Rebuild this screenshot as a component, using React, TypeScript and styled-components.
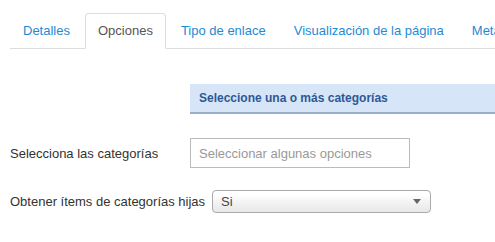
import React from "react";
import styled, { createGlobalStyle } from "styled-components";

const Global = createGlobalStyle`
  html, body { margin: 0; padding: 0; background: #fff; }
  body { font-family: "Liberation Sans", Arial, sans-serif; font-size: 13px; color: #333; overflow: hidden; }
`;

const Page = styled.div`
  width: 495px;
  height: 242px;
  overflow: hidden;
  padding: 13px 0 0 10px;
  box-sizing: border-box;
`;

const TabList = styled.ul`
  list-style: none;
  margin: 0;
  padding: 0;
  display: flex;
  white-space: nowrap;
  border-bottom: 1px solid #ddd;
  width: 600px;
`;

const Tab = styled.li<{ $active?: boolean }>`
  margin: 0 2px -1px 0;
  padding: 8px 12px;
  line-height: 18px;
  font-size: 13px;
  border: 1px solid ${(p) => (p.$active ? "#ddd" : "transparent")};
  border-bottom-color: ${(p) => (p.$active ? "#fff" : "transparent")};
  border-radius: 4px 4px 0 0;
  background: ${(p) => (p.$active ? "#fff" : "transparent")};
  color: ${(p) => (p.$active ? "#555" : "#1d8ad6")};
  cursor: pointer;
`;

const Content = styled.div`
  padding-top: 35px;
`;

const SectionHeader = styled.div`
  margin-left: 180px;
  height: 28px;
  background: #d6e6f8;
  border-bottom: 2px solid #98aecd;
  display: flex;
  align-items: center;
  padding-left: 9px;
  margin-right: -10px;
  font-weight: bold;
  font-size: 12px;
  color: #2f5893;
`;

const Row = styled.div<{ $top: number }>`
  display: flex;
  align-items: center;
  margin-top: ${(p) => p.$top}px;
`;

const Label = styled.label`
  flex-shrink: 0;
  min-width: 180px;
  padding-right: 7px;
  box-sizing: border-box;
  font-size: 13px;
  color: #333;
  white-space: nowrap;
`;

const TextInput = styled.input`
  width: 220px;
  height: 30px;
  box-sizing: border-box;
  border: 1px solid #bbb;
  padding: 0 8px;
  font-family: "Liberation Sans", Arial, sans-serif;
  font-size: 13px;
  color: #444;
  outline: none;
  &::placeholder { color: #999; }
`;

const Select = styled.div`
  width: 219px;
  height: 23px;
  box-sizing: border-box;
  border: 1px solid #aaa;
  border-radius: 4px;
  background: linear-gradient(#ffffff 20%, #f4f4f4 50%, #e8e8e8 100%);
  display: flex;
  align-items: center;
  justify-content: space-between;
  padding: 0 9px 0 8px;
  font-size: 13px;
  color: #444;
`;

const Arrow = styled.span`
  width: 0;
  height: 0;
  border-left: 4px solid transparent;
  border-right: 4px solid transparent;
  border-top: 5px solid #666;
`;

export default function App() {
  const tabs = ["Detalles", "Opciones", "Tipo de enlace", "Visualización de la página", "Metadatos"];
  return (
    <Page>
      <Global />
      <TabList>
        {tabs.map((t) => (
          <Tab key={t} $active={t === "Opciones"}>{t}</Tab>
        ))}
      </TabList>
      <Content>
        <SectionHeader>Seleccione una o más categorías</SectionHeader>
        <Row $top={24}>
          <Label>Selecciona las categorías</Label>
          <TextInput placeholder="Seleccionar algunas opciones" />
        </Row>
        <Row $top={22}>
          <Label>Obtener ítems de categorías hijas</Label>
          <Select>
            <span>Si</span>
            <Arrow />
          </Select>
        </Row>
      </Content>
    </Page>
  );
}
